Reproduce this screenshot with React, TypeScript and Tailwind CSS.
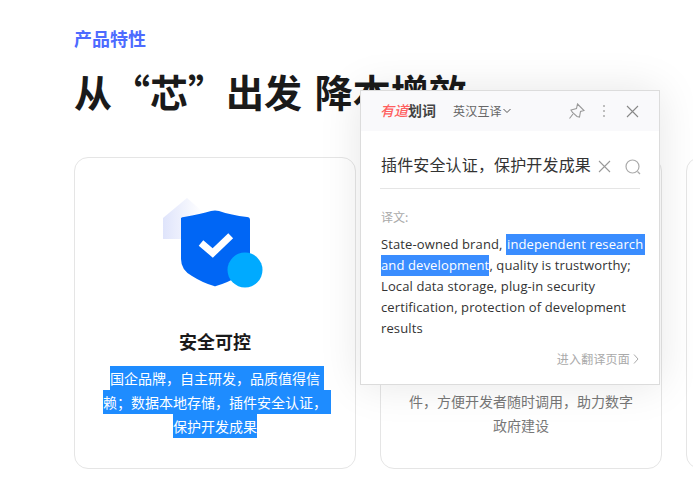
import React from "react";

const cjk = "font-['Noto_Sans_CJK_SC','Noto_Sans',sans-serif]";

function ShieldIcon() {
  return (
    <svg width="120" height="100" viewBox="0 0 120 100" className="block">
      <defs>
        <linearGradient id="g1" x1="0" y1="0" x2="1" y2="0">
          <stop offset="0" stopColor="#dfe4fb" />
          <stop offset="1" stopColor="#ffffff" />
        </linearGradient>
      </defs>
      <path d="M8 21 L32 1 L47 14 L47 42 L8 42 Z" fill="url(#g1)" />
      <path
        d="M26 21 Q27 20 29 20 Q46 17 56 14 Q60 13 64 14 Q76 18 92 20 Q95 20 95 23 L95 62 Q95 73 84 79 Q72 86 61 89 Q60 89.5 59 89 Q48 86 37 79 Q26 73 26 62 Z"
        fill="#0066f5"
      />
      <path d="M46 46 L57.7 56 L75.7 38.7" fill="none" stroke="#fff" strokeWidth="7" />
      <circle cx="90" cy="73" r="17.5" fill="#00aaff" />
    </svg>
  );
}

function Card({ children }: { children: React.ReactNode }) {
  return (
    <div className="w-[282px] h-[312px] shrink-0 rounded-[14px] border border-[#e5e5e5] bg-white flex flex-col items-center">
      {children}
    </div>
  );
}

function Popup() {
  return (
    <div className="absolute left-[360px] top-[90px] w-[300px] h-[295px] bg-white border border-[#dcdcdc] shadow-[0_0_40px_rgba(0,0,0,0.10)] flex flex-col">
      <div className="h-[40px] shrink-0 bg-[#f9f9fb] flex items-center pl-[19px] pr-[20px]">
        <span className="text-[14px] font-medium text-[#ff5f5f] italic leading-none -mt-[2px]">有道</span>
        <span className="text-[14px] font-bold text-[#444] leading-none -mt-[2px]">划词</span>
        <span className="text-[12px] tracking-[0.2px] text-[#666] ml-[17px]">英汉互译</span>
        <svg width="8" height="6" viewBox="0 0 8 6" className="ml-[1px]">
          <path d="M0.5 1 L4 4.5 L7.5 1" fill="none" stroke="#555" strokeWidth="1" />
        </svg>
        <svg width="17" height="17" viewBox="0 0 17 17" className="ml-auto">
          <path
            d="M9.5 1 L16 7.5 L12.5 8.5 L11.5 14 L9 13.5 L4.5 9.5 L3 7 L8.5 5.5 Z M5 11 L1.5 15.5"
            fill="none"
            stroke="#999"
            strokeWidth="1.1"
          />
        </svg>
        <svg width="4" height="14" viewBox="0 0 4 14" className="ml-[17px]">
          <circle cx="2" cy="2" r="1" fill="#aaa" />
          <circle cx="2" cy="7" r="1" fill="#aaa" />
          <circle cx="2" cy="12" r="1" fill="#aaa" />
        </svg>
        <svg width="13" height="13" viewBox="0 0 13 13" className="ml-[20px]">
          <path d="M1 1 L12 12 M12 1 L1 12" stroke="#888" strokeWidth="1.1" />
        </svg>
      </div>
      <div className="mx-[19px] h-[58px] border-b border-[#e5e5e5] flex items-center pt-[8px]">
        <span className="ml-[1px] text-[16px] tracking-[0.15px] text-[#333] whitespace-nowrap">插件安全认证，保护开发成果</span>
        <svg width="13" height="13" viewBox="0 0 13 13" className="ml-[7px] mt-[6px] shrink-0">
          <path d="M1 1 L12 12 M12 1 L1 12" stroke="#999" strokeWidth="1.1" />
        </svg>
        <svg width="16" height="16" viewBox="0 0 16 16" className="ml-[14px] mt-[6px] shrink-0">
          <circle cx="7.5" cy="7.5" r="6.5" fill="none" stroke="#aaa" strokeWidth="1.2" />
          <path d="M12.5 12.5 L15 15" stroke="#aaa" strokeWidth="1.2" />
        </svg>
      </div>
      <div className="px-[20px] pt-[18px]">
        <div className="text-[12px] leading-[20px] text-[#aaa]">译文:</div>
        <div className="mt-[7px] w-[268px] text-[13px] leading-[21px] tracking-[0.12px] text-[#333] font-['Open_Sans',sans-serif] whitespace-nowrap">
          <div>
            State-owned brand,{" "}
            <span className="inline-block bg-[#3a8dff] text-white pl-[1px] pr-[2px]">independent research</span>
          </div>
          <div>
            <span className="inline-block bg-[#3a8dff] text-white">and development</span>, quality is trustworthy;
          </div>
          <div>Local data storage, plug-in security</div>
          <div>certification, protection of development</div>
          <div>results</div>
        </div>
        <div className="mt-[10px] flex items-center justify-end text-[12px] tracking-[0.2px] leading-[20px] text-[#aaa]">
          <span>进入翻译页面</span>
          <svg width="6" height="10" viewBox="0 0 6 10" className="ml-[3px]">
            <path d="M1 0.5 L5 5 L1 9.5" fill="none" stroke="#aaa" strokeWidth="1" />
          </svg>
        </div>
      </div>
    </div>
  );
}

export default function App() {
  return (
    <div className={`relative w-[693px] h-[478px] overflow-hidden bg-white ${cjk}`}>
      <div className="pl-[74px] pt-[25px]">
        <div className="text-[18px] leading-[26px] font-bold text-[#4d6bff]">产品特性</div>
        <h1 className="mt-[12px] text-[38px] leading-[56px] font-bold text-[#1a1a1a] whitespace-nowrap [word-spacing:4px]">
          从“芯”出发 降本增效
        </h1>
        <div className="mt-[38px] flex gap-[24px]">
          <Card>
            <div className="mt-[39px]">
              <ShieldIcon />
            </div>
            <div className="mt-[31px] text-[18px] leading-[26px] font-bold text-[#1a1a1a]">安全可控</div>
            <div className="mt-[12px] flex flex-col items-center text-[14px] leading-[24px] text-white">
              <div className="bg-[#1e8cff] pr-[4px] -mr-[4px]">国企品牌，自主研发，品质值得信</div>
              <div className="bg-[#1e8cff] pr-[4px] -mr-[4px]">赖；数据本地存储，插件安全认证，</div>
              <div className="bg-[#1e8cff]">保护开发成果</div>
            </div>
          </Card>
          <Card>
            <div className="mt-[231px] flex flex-col items-center text-[14px] leading-[24px] text-[#777]">
              <div>件，方便开发者随时调用，助力数字</div>
              <div>政府建设</div>
            </div>
          </Card>
          <Card>
            <div />
          </Card>
        </div>
      </div>
      <Popup />
    </div>
  );
}
